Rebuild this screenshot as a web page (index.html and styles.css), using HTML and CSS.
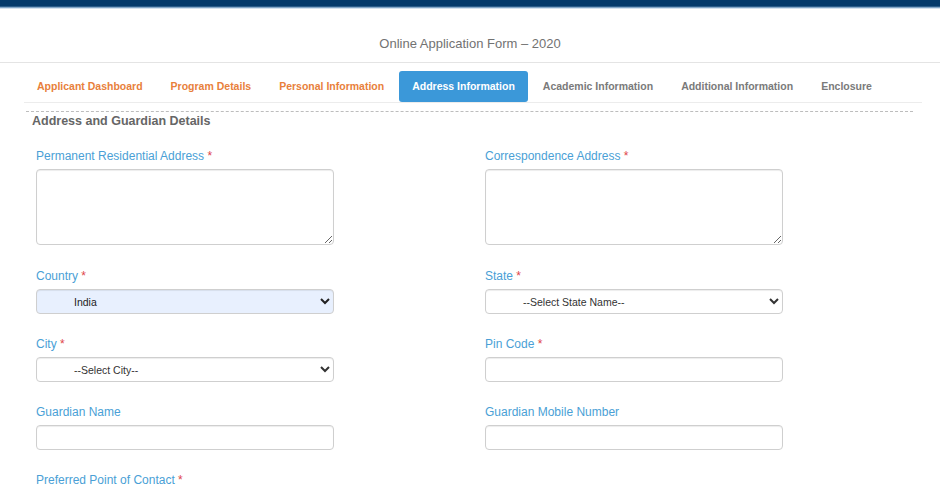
FILE: index.html
```html
<!DOCTYPE html>
<html lang="en">
<head>
  <meta charset="UTF-8" />
  <meta name="viewport" content="width=device-width, initial-scale=1" />
  <title>Online Application Form - 2020</title>
  <link rel="stylesheet" href="styles.css">
</head>

<body>
  <div class="page">
    <div class="topbar"></div>

    <div class="form-title">Online Application Form &ndash; 2020</div>

    <ul class="tabs">
      <li class="done"><a href="#">Applicant Dashboard</a></li>
      <li class="done"><a href="#">Program Details</a></li>
      <li class="done"><a href="#">Personal Information</a></li>
      <li class="active"><a href="#">Address Information</a></li>
      <li><a href="#">Academic Information</a></li>
      <li><a href="#">Additional Information</a></li>
      <li><a href="#">Enclosure</a></li>
    </ul>

    <div class="section">
      <h4>Address and Guardian Details</h4>

      <div class="form-grid">
        <div class="field">
          <label for="permAddress">Permanent Residential Address <span class="req">*</span></label>
          <textarea id="permAddress"></textarea>
        </div>
        <div class="field">
          <label for="corrAddress">Correspondence Address <span class="req">*</span></label>
          <textarea id="corrAddress"></textarea>
        </div>

        <div class="field">
          <label for="country">Country <span class="req">*</span></label>
          <select id="country" class="filled">
            <option>India</option>
          </select>
        </div>
        <div class="field">
          <label for="state">State <span class="req">*</span></label>
          <select id="state">
            <option>--Select State Name--</option>
          </select>
        </div>

        <div class="field">
          <label for="city">City <span class="req">*</span></label>
          <select id="city">
            <option>--Select City--</option>
          </select>
        </div>
        <div class="field">
          <label for="pinCode">Pin Code <span class="req">*</span></label>
          <input id="pinCode" type="text" />
        </div>

        <div class="field">
          <label for="guardianName">Guardian Name</label>
          <input id="guardianName" type="text" />
        </div>
        <div class="field">
          <label for="guardianMobile">Guardian Mobile Number</label>
          <input id="guardianMobile" type="text" />
        </div>

        <div class="field">
          <label for="contact">Preferred Point of Contact <span class="req">*</span></label>
          <select id="contact">
            <option>--Select--</option>
          </select>
        </div>
      </div>
    </div>
  </div>
</body>
</html>
```

FILE: styles.css
```css
* {
  box-sizing: border-box;
}

body {
  margin: 0;
  padding: 0;
  font-family: 'Liberation Sans', Arial, sans-serif;
  background: #fff;
  color: #333;
}

.page {
  height: 491px;
  overflow: hidden;
}

.topbar {
  height: 9px;
  background: linear-gradient(to bottom, #033a6b 0, #033a6b 6px, #4f7ea9 7px, #b7cfe4 8px, #eef4f9 9px);
}

.form-title {
  padding: 27px 0 10px;
  line-height: 16px;
  font-size: 13px;
  color: #727272;
  text-align: center;
  border-bottom: 1px solid #e4e4e4;
}

.tabs {
  list-style: none;
  margin: 8px 18px 0 24px;
  padding: 0;
  display: flex;
  border-bottom: 1px solid #ececec;
}

.tabs li {
  margin-right: 2px;
}

.tabs a {
  display: block;
  height: 31px;
  line-height: 31px;
  padding: 0 13px;
  font-size: 10.5px;
  font-weight: bold;
  color: #7a7a7a;
  text-decoration: none;
}

.tabs li.done a {
  color: #e8803b;
}

.tabs li.active a {
  background: #3b98d9;
  color: #fff;
  border-radius: 3px;
}

.section {
  margin: 8px 0 0 24px;
}

.section h4 {
  margin: 0 27px 0 2px;
  padding: 2px 0 0 6px;
  border-top: 1px dashed #bdbdbd;
  font-size: 12.5px;
  line-height: 15px;
  color: #666;
}

.form-grid {
  width: 898px;
  display: grid;
  grid-template-columns: 1fr 1fr;
  row-gap: 23px;
  padding-top: 20px;
}

.field {
  padding: 0 12px;
}

.field label {
  display: block;
  font-size: 12px;
  line-height: 15px;
  color: #4a9fd6;
  margin-bottom: 5px;
}

.req {
  color: #e0454a;
}

.field textarea,
.field select,
.field input {
  display: block;
  width: 70%;
  border: 1px solid #cfcfcf;
  border-radius: 4px;
  background-color: #fff;
  box-shadow: inset 0 1px 1px rgba(0, 0, 0, 0.075);
  font-family: 'Liberation Sans', Arial, sans-serif;
  font-size: 10.5px;
  color: #333;
  outline: none;
}

.field textarea {
  height: 76px;
  margin: 0 0 1px;
}

.field select {
  height: 25px;
  padding: 0 4px 0 33px;
}

.field select.filled {
  background-color: #e8f0fe;
  color: #222;
}

.field input {
  height: 25px;
  padding: 0 8px;
}
```
